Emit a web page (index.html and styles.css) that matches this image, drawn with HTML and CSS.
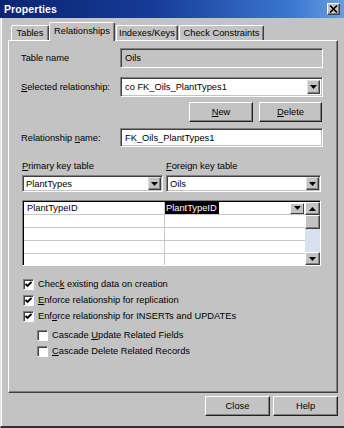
FILE: index.html
```html
<!DOCTYPE html>
<html>
<head>
<meta charset="utf-8">
<link rel="stylesheet" href="styles.css">
</head>
<body>
<div class="window">
  <div class="titlebar">
    <span class="title">Properties</span>
    <span class="close"><svg width="9" height="8" viewBox="0 0 9 8"><path d="M1 0.5 L8 7.5 M8 0.5 L1 7.5" stroke="#000" stroke-width="1.6"/></svg></span>
  </div>
  <div class="frame">
    <div class="tabs">
      <div class="tab t1">Tables</div>
      <div class="tab t2 active">Relationships</div>
      <div class="tab t3">Indexes/Keys</div>
      <div class="tab t4">Check Constraints</div>
    </div>
    <div class="panel">
      <div class="row row-table">
        <span class="label">Table name</span>
        <div class="field disabled">Oils</div>
      </div>
      <div class="row row-sel">
        <span class="label"><u>S</u>elected relationship:</span>
        <div class="combo wide">
          <span class="ctext">co FK_Oils_PlantTypes1</span>
          <span class="dd"><svg width="7" height="4" viewBox="0 0 7 4"><path d="M0 0 H7 L3.5 4 Z" fill="#000"/></svg></span>
        </div>
      </div>
      <div class="btnrow">
        <div class="btn b-new"><u>N</u>ew</div>
        <div class="btn b-del"><u>D</u>elete</div>
      </div>
      <div class="row row-name">
        <span class="label">Relationship <u>n</u>ame:</span>
        <div class="field">FK_Oils_PlantTypes1</div>
      </div>
      <div class="keys">
        <div class="keycol kc-pk">
          <span class="klabel"><u>P</u>rimary key table</span>
          <div class="combo">
            <span class="ctext">PlantTypes</span>
            <span class="dd"><svg width="7" height="4" viewBox="0 0 7 4"><path d="M0 0 H7 L3.5 4 Z" fill="#000"/></svg></span>
          </div>
        </div>
        <div class="keycol kc-fk">
          <span class="klabel"><u>F</u>oreign key table</span>
          <div class="combo">
            <span class="ctext">Oils</span>
            <span class="dd"><svg width="7" height="4" viewBox="0 0 7 4"><path d="M0 0 H7 L3.5 4 Z" fill="#000"/></svg></span>
          </div>
        </div>
      </div>
      <div class="gridwrap">
        <div class="grid">
          <div class="grow">
            <div class="gcell gl">PlantTypeID</div>
            <div class="gcell gr"><span class="hl">PlantTypeID</span><span class="gdd"><svg width="7" height="4" viewBox="0 0 7 4"><path d="M0 0 H7 L3.5 4 Z" fill="#000"/></svg></span></div>
          </div>
          <div class="grow"><div class="gcell gl"></div><div class="gcell gr"></div></div>
          <div class="grow"><div class="gcell gl"></div><div class="gcell gr"></div></div>
          <div class="grow"><div class="gcell gl"></div><div class="gcell gr"></div></div>
          <div class="grow last"><div class="gcell gl"></div><div class="gcell gr"></div></div>
        </div>
        <div class="scrollbar">
          <div class="sbtn"><svg width="7" height="4" viewBox="0 0 7 4"><path d="M0 4 H7 L3.5 0 Z" fill="#000"/></svg></div>
          <div class="thumb"></div>
          <div class="track"></div>
          <div class="sbtn"><svg width="7" height="4" viewBox="0 0 7 4"><path d="M0 0 H7 L3.5 4 Z" fill="#000"/></svg></div>
        </div>
      </div>
      <div class="checks">
        <div class="chk"><span class="box"><svg width="9" height="9" viewBox="0 0 9 9"><path d="M1.5 4 L3.5 6 L7.5 2" stroke="#000" stroke-width="1.8" fill="none"/></svg></span><span>Chec<u>k</u> existing data on creation</span></div>
        <div class="chk"><span class="box"><svg width="9" height="9" viewBox="0 0 9 9"><path d="M1.5 4 L3.5 6 L7.5 2" stroke="#000" stroke-width="1.8" fill="none"/></svg></span><span><u>E</u>nforce relationship for replication</span></div>
        <div class="chk"><span class="box"><svg width="9" height="9" viewBox="0 0 9 9"><path d="M1.5 4 L3.5 6 L7.5 2" stroke="#000" stroke-width="1.8" fill="none"/></svg></span><span>Enf<u>o</u>rce relationship for INSERTs and UPDATEs</span></div>
        <div class="chk sub first-sub"><span class="box"></span><span>Cascade <u>U</u>pdate Related Fields</span></div>
        <div class="chk sub"><span class="box"></span><span><u>C</u>ascade Delete Related Records</span></div>
      </div>
    </div>
    <div class="footer">
      <div class="btn b-close">Close</div>
      <div class="btn b-help">Help</div>
    </div>
  </div>
</div>
</body>
</html>
```

FILE: styles.css
```css
* { box-sizing: border-box; margin: 0; padding: 0; }
html, body { margin: 0; width: 344px; height: 428px; overflow: hidden; background: #c3c3c3; }
body { font-family: "Liberation Sans", Arial, sans-serif; font-size: 9.3px; color: #000; }

.window { width: 344px; height: 428px; display: flex; flex-direction: column; background: #c3c3c3; }

.titlebar {
  height: 18px; flex: none;
  background: linear-gradient(90deg, #0b2470 0%, #163c98 45%, #3c78d0 85%, #6a9ee0 100%);
  display: flex; align-items: center; justify-content: space-between;
  padding: 0 4px 0 4px;
}
.title { color: #fff; font-weight: bold; font-size: 10.5px; letter-spacing: 0.1px; }
.close {
  width: 13px; height: 12px; background: #c3c3c3;
  border: 1px solid; border-color: #fff #404040 #404040 #fff;
  box-shadow: inset -1px -1px 0 #808080;
  display: flex; align-items: center; justify-content: center;
}

.frame {
  flex: 1; display: flex; flex-direction: column;
  border-left: 1px solid #e4e4e4;
  box-shadow: inset 1px 0 0 #ffffff;
  border-bottom: 2px solid #303030;
  padding-left: 7px;
}

.tabs { display: flex; align-items: flex-end; height: 22px; padding-left: 3px; position: relative; z-index: 1; }
.tab {
  height: 15px;
  border: 1px solid; border-bottom: none;
  border-color: #fff #404040 transparent #fff;
  border-radius: 2px 2px 0 0;
  box-shadow: inset -1px 0 0 #808080;
  display: flex; align-items: center; justify-content: center;
  background: #c3c3c3;
}
.t1 { width: 38px; }
.t2 { width: 66px; }
.t3 { width: 62px; margin-left: 1px; }
.t4 { width: 85px; margin-left: 1px; }
.tab.active { height: 19px; margin-bottom: -1px; padding-bottom: 2px; }

.panel {
  width: 330px; height: 353px; flex: none;
  border: 1px solid; border-color: #fff #404040 #404040 #fff;
  box-shadow: inset -1px -1px 0 #808080;
  display: flex; flex-direction: column;
}

.row { display: flex; align-items: center; padding-left: 12px; flex: none; }
.label { width: 99px; flex: none; }
.row .field, .row .combo { width: 203px; }
.row-table { margin-top: 7px; height: 20px; }
.row-sel { margin-top: 9px; height: 20px; }
.row-name { margin-top: 6px; height: 19px; }

.field {
  height: 100%; background: #fff;
  border: 1px solid; border-color: #808080 #fff #fff #808080;
  box-shadow: inset 1px 1px 0 #404040, inset -1px -1px 0 #c3c3c3;
  display: flex; align-items: center; padding-left: 4px;
}
.field.disabled { background: #c3c3c3; }

.combo {
  height: 100%; background: #fff;
  border: 1px solid; border-color: #808080 #fff #fff #808080;
  box-shadow: inset 1px 1px 0 #404040, inset -1px -1px 0 #c3c3c3;
  display: flex; align-items: center; justify-content: space-between;
  padding: 2px 2px 2px 4px;
}
.ctext { white-space: nowrap; }
.dd {
  width: 13px; height: 100%; flex: none; background: #c3c3c3;
  border: 1px solid; border-color: #e0e0e0 #404040 #404040 #e0e0e0;
  box-shadow: inset -1px -1px 0 #808080;
  display: flex; align-items: center; justify-content: center;
}

.btnrow { display: flex; justify-content: flex-end; gap: 6px; padding-right: 15px; margin-top: 5px; height: 20px; flex: none; }
.btn {
  height: 20px; background: #c3c3c3;
  border: 1px solid; border-color: #fff #202020 #202020 #fff;
  box-shadow: inset -1px -1px 0 #808080;
  display: flex; align-items: center; justify-content: center;
}
.b-new { width: 64px; }
.b-del { width: 63px; }

.keys { display: flex; gap: 3px; padding-left: 13px; margin-top: 13px; flex: none; }
.keycol { display: flex; flex-direction: column; }
.kc-pk { width: 141px; }
.kc-fk { width: 155px; }
.klabel { height: 12px; line-height: 12px; margin-bottom: 3px; }
.keycol .combo { height: 17px; padding: 1px 1px 1px 3px; }

.gridwrap {
  display: flex; margin-left: 13px; margin-top: 8px; width: 299px; height: 66px; flex: none;
  border: 1px solid; border-color: #808080 #fff #fff #808080;
  box-shadow: inset 1px 1px 0 #000;
  padding: 1px 0 0 1px;
  background: #fff;
}
.grid { flex: 1; display: flex; flex-direction: column; }
.grow { display: flex; height: 13px; border-bottom: 1px solid #c8c8c8; flex: none; }
.grow.last { border-bottom: none; flex: 1; }
.gcell { height: 100%; display: flex; align-items: center; }
.gl { width: 141px; border-right: 1px solid #c8c8c8; padding-left: 3px; }
.gr { flex: 1; justify-content: space-between; }
.hl { background: #000; color: #fff; padding: 0 2px 0 1px; height: 100%; display: flex; align-items: center; }
.gdd {
  width: 14px; height: 11px; background: #c3c3c3;
  border: 1px solid; border-color: #fff #404040 #404040 #fff;
  display: flex; align-items: center; justify-content: center; margin-right: 1px;
}
.scrollbar { width: 15px; flex: none; display: flex; flex-direction: column; }
.sbtn, .thumb {
  height: 13px; flex: none; background: #c3c3c3;
  border: 1px solid; border-color: #fff #404040 #404040 #fff;
  box-shadow: inset -1px -1px 0 #808080;
  display: flex; align-items: center; justify-content: center;
}
.thumb { height: 14px; }
.track { flex: 1; background: #d8e2ee; }

.checks { display: flex; flex-direction: column; margin-top: 10px; padding-left: 14px; flex: none; }
.chk { display: flex; align-items: center; height: 16px; gap: 4px; white-space: nowrap; }
.chk.sub { padding-left: 14px; }
.chk.first-sub { margin-top: 3px; }
.box {
  width: 11px; height: 11px; flex: none; background: #fff;
  border: 1px solid; border-color: #808080 #fff #fff #808080;
  box-shadow: inset 1px 1px 0 #404040;
  display: flex; align-items: center; justify-content: center;
}

.footer { display: flex; justify-content: flex-end; gap: 3px; padding-right: 6px; margin-top: 3px; flex: none; }
.b-close, .b-help { width: 65px; }
```
